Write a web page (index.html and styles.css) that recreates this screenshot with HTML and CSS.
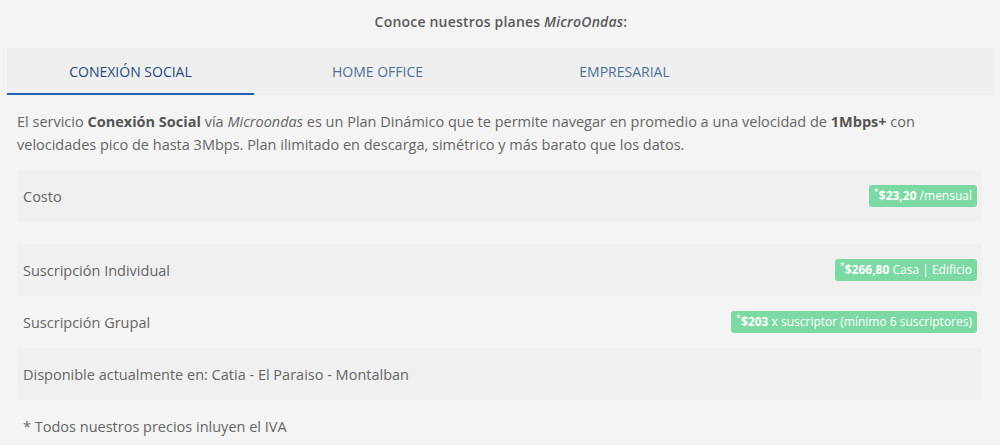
FILE: index.html
```html
<!DOCTYPE html>
<html lang="es">
<head>
    <meta charset="UTF-8">
    <title>Planes MicroOndas</title>
    <link rel="stylesheet" href="styles.css">
</head>
<body>

    <p class="intro">Conoce nuestros planes <em>MicroOndas</em>:</p>

    <div class="plans">
        <ul class="tabs">
            <li class="tab active">CONEXIÓN SOCIAL</li>
            <li class="tab">HOME OFFICE</li>
            <li class="tab">EMPRESARIAL</li>
        </ul>

        <div class="tab-content">
            <p class="desc">El servicio <strong>Conexión Social</strong> vía <em>Microondas</em> es un Plan Dinámico que te permite navegar en promedio a una velocidad de <strong>1Mbps+</strong> con velocidades pico de hasta 3Mbps. Plan ilimitado en descarga, simétrico y más barato que los datos.</p>

            <table class="prices">
                <tbody>
                    <tr>
                        <td>Costo</td>
                        <td class="price"><span class="badge"><sup>*</sup><b>$23,20</b> /mensual</span></td>
                    </tr>
                    <tr class="spacer"><td colspan="2"></td></tr>
                    <tr>
                        <td>Suscripción Individual</td>
                        <td class="price"><span class="badge"><sup>*</sup><b>$266,80</b> Casa | Edificio</span></td>
                    </tr>
                    <tr>
                        <td>Suscripción Grupal</td>
                        <td class="price"><span class="badge"><sup>*</sup><b>$203</b> x suscriptor (mínimo 6 suscriptores)</span></td>
                    </tr>
                    <tr>
                        <td colspan="2">Disponible actualmente en: Catia - El Paraiso - Montalban</td>
                    </tr>
                    <tr>
                        <td colspan="2">* Todos nuestros precios inluyen el IVA</td>
                    </tr>
                </tbody>
            </table>
        </div>
    </div>

</body>
</html>
```

FILE: styles.css
```css
body {
    font-family: "Open Sans", "Noto Sans", sans-serif;
    background-color: #f4f4f4;
    color: #666;
    margin: 0;
    padding: 0 5px 0 7px;
}

.intro {
    margin: 0;
    height: 48px;
    line-height: 44px;
    text-align: center;
    font-size: 14px;
    font-weight: 600;
    letter-spacing: 0.2px;
    color: #5a5a5a;
}

.tabs {
    display: grid;
    grid-template-columns: repeat(4, 1fr);
    list-style: none;
    margin: 0;
    padding: 0;
    background-color: #efefef;
}

.tab {
    height: 45px;
    line-height: 47px;
    text-align: center;
    font-size: 14px;
    color: #4e6f97;
    border-bottom: 2px solid transparent;
}

.tab.active {
    color: #244a7c;
    border-bottom-color: #1e60b0;
}

.tab-content {
    padding: 15px 13px 0 10px;
}

.desc {
    margin: 0 0 14px;
    font-size: 14.5px;
    line-height: 23px;
    color: #666;
}

.desc strong {
    color: #555;
}

.prices {
    width: 100%;
    border-collapse: collapse;
}

.prices td {
    height: 52px;
    padding: 0 5px 0 6px;
    font-size: 14.5px;
    color: #666;
}

.prices tr:nth-child(odd) {
    background-color: #f0f0f0;
}

.prices tr.spacer td {
    height: 22px;
}

.price {
    text-align: right;
}

.badge {
    display: inline-block;
    background-color: #7dd9a3;
    color: #fff;
    font-size: 12px;
    line-height: 22px;
    padding: 0 5px;
    border-radius: 3px;
}

.badge sup {
    font-size: 9px;
    line-height: 0;
}
```
